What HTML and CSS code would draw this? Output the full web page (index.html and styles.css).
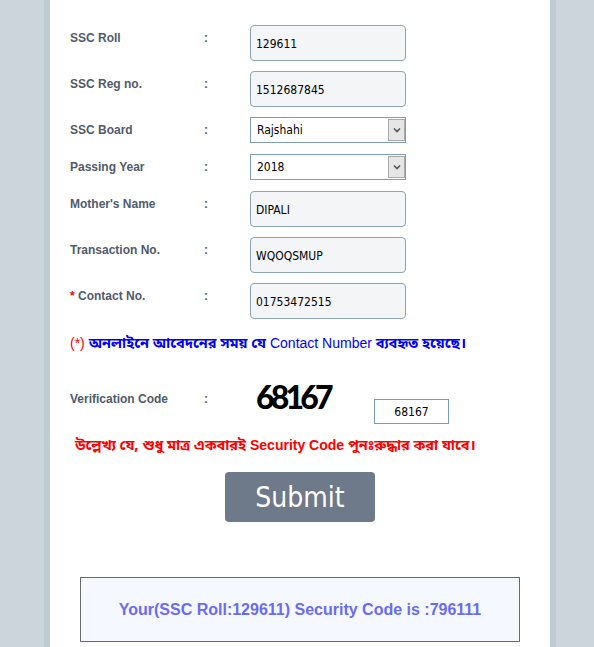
FILE: index.html
```html
<!DOCTYPE html>
<html>
<head>
<meta charset="utf-8">
<title>SSC Security Code</title>
<link rel="stylesheet" href="styles.css">
</head>
<body>
<div class="frame">
  <div class="form">
    <div class="row gap10">
      <div class="label">SSC Roll</div><div class="colon">:</div>
      <div class="field">129611</div>
    </div>
    <div class="row gap10">
      <div class="label">SSC Reg no.</div><div class="colon">:</div>
      <div class="field">1512687845</div>
    </div>
    <div class="row gap11">
      <div class="label">SSC Board</div><div class="colon">:</div>
      <div class="select"><span class="val">Rajshahi</span><span class="arrow"><svg width="8" height="6" viewBox="0 0 8 6"><path d="M1 1.5 L4 4.5 L7 1.5" fill="none" stroke="#555" stroke-width="1.6"/></svg></span></div>
    </div>
    <div class="row gap11">
      <div class="label">Passing Year</div><div class="colon">:</div>
      <div class="select"><span class="val">2018</span><span class="arrow"><svg width="8" height="6" viewBox="0 0 8 6"><path d="M1 1.5 L4 4.5 L7 1.5" fill="none" stroke="#555" stroke-width="1.6"/></svg></span></div>
    </div>
    <div class="row gap10">
      <div class="label">Mother's Name</div><div class="colon">:</div>
      <div class="field">DIPALI</div>
    </div>
    <div class="row gap10">
      <div class="label">Transaction No.</div><div class="colon">:</div>
      <div class="field">WQOQSMUP</div>
    </div>
    <div class="row">
      <div class="label"><span class="req">*</span> Contact No.</div><div class="colon">:</div>
      <div class="field">01753472515</div>
    </div>
    <p class="note1"><span class="req">(*)</span> <span class="bn">অনলাইনে আবেদনের সময় যে</span> Contact Number <span class="bn">ব্যবহৃত হয়েছে।</span></p>
    <div class="row verif">
      <div class="label vlabel">Verification Code</div><div class="colon vlabel">:</div>
      <div class="captcha">68167</div>
      <div class="vinput">68167</div>
    </div>
    <p class="note2"><span class="bn">উল্লেখ্য যে, শুধু মাত্র একবারই</span> Security Code <span class="bn">পুনঃরুদ্ধার করা যাবে।</span></p>
  </div>
  <div class="actions"><button class="submit" type="button">Submit</button></div>
  <div class="result">Your(SSC Roll:129611) Security Code is :796111</div>
</div>
</body>
</html>
```
FILE: styles.css
```css
html, body {
  margin: 0;
  padding: 0;
}
body {
  background: #ccd5dc;
  font-family: "Liberation Sans", Arial, sans-serif;
  width: 594px;
  height: 647px;
  overflow: hidden;
}
.frame {
  margin-left: 44px;
  width: 500px;
  min-height: 647px;
  background: #ffffff;
  border-left: 6px solid #bfcbd3;
  border-right: 6px solid #bfcbd3;
}
.form {
  padding: 25px 0 0 20px;
}
.row {
  display: flex;
  align-items: flex-start;
}
.gap10 { margin-bottom: 10px; }
.gap11 { margin-bottom: 11px; }
.label, .colon {
  font-size: 12px;
  line-height: 14px;
  font-weight: bold;
  color: #515b6a;
  padding-top: 6px;
}
.label { width: 134px; }
.colon { width: 46px; }
.req { color: #ff0000; }
.field {
  box-sizing: border-box;
  width: 156px;
  height: 36px;
  border: 1px solid #8ea3b6;
  border-radius: 4px;
  background: #f3f5f7;
  padding: 2px 0 0 5px;
  display: flex;
  align-items: center;
  font-family: "DejaVu Sans Condensed", "DejaVu Sans", sans-serif;
  font-size: 12px;
  color: #000;
}
.select {
  box-sizing: border-box;
  width: 156px;
  height: 26px;
  border: 1px solid #7f9db9;
  background: #fff;
  display: flex;
  align-items: stretch;
  font-family: "DejaVu Sans Condensed", "DejaVu Sans", sans-serif;
  font-size: 12px;
  color: #000;
}
.select .val {
  flex: 1;
  display: flex;
  align-items: center;
  padding-left: 6px;
}
.select .arrow {
  box-sizing: border-box;
  width: 17px;
  margin: 1px 0 1px 0;
  background: #e6e6e6;
  border: 1px solid #a9a9a9;
  display: flex;
  align-items: center;
  justify-content: center;
}
.note1 {
  margin: 14px 0 0 0;
  font-size: 14px;
  line-height: 20px;
  height: 20px;
  color: #0000ff;
}
.note1 .bn { font-size: 14.5px; }
.bn {
  font-family: "Noto Sans Bengali", "Lohit Bengali", "Liberation Sans", sans-serif;
  font-weight: bold;
  line-height: 20px;
}
.verif {
  margin-top: 28px;
}
.vlabel { padding-top: 11px; }
.captcha {
  box-sizing: border-box;
  width: 124px;
  padding-left: 6px;
  font-family: Lato, "Liberation Sans", sans-serif;
  font-weight: 900;
  font-size: 32px;
  line-height: 32px;
  letter-spacing: -3.8px;
  color: #000;
}
.vinput {
  box-sizing: border-box;
  margin-top: 18px;
  width: 75px;
  height: 25px;
  border: 1px solid #7a9cbb;
  background: #fff;
  display: flex;
  align-items: center;
  justify-content: center;
  font-family: "DejaVu Sans Condensed", "DejaVu Sans", sans-serif;
  font-size: 12px;
  color: #000;
}
.note2 {
  margin: 11px 0 0 5px;
  font-size: 14px;
  line-height: 20px;
  height: 20px;
  font-weight: bold;
  color: #ff0000;
}
.note2 .bn { font-size: 14.5px; }
.actions {
  display: flex;
  justify-content: center;
  margin-top: 17px;
}
.submit {
  width: 150px;
  height: 50px;
  border: none;
  border-radius: 4px;
  background: #6e7989;
  color: #ffffff;
  font-family: "DejaVu Sans Condensed", "DejaVu Sans", sans-serif;
  font-size: 28px;
  padding: 0;
}
.result {
  box-sizing: border-box;
  margin: 55px auto 0 auto;
  width: 440px;
  height: 65px;
  border: 1px solid #6a6a6a;
  background: #f5f9ff;
  display: flex;
  align-items: center;
  justify-content: center;
  font-size: 16px;
  font-weight: bold;
  color: #6b6bf2;
}
```
